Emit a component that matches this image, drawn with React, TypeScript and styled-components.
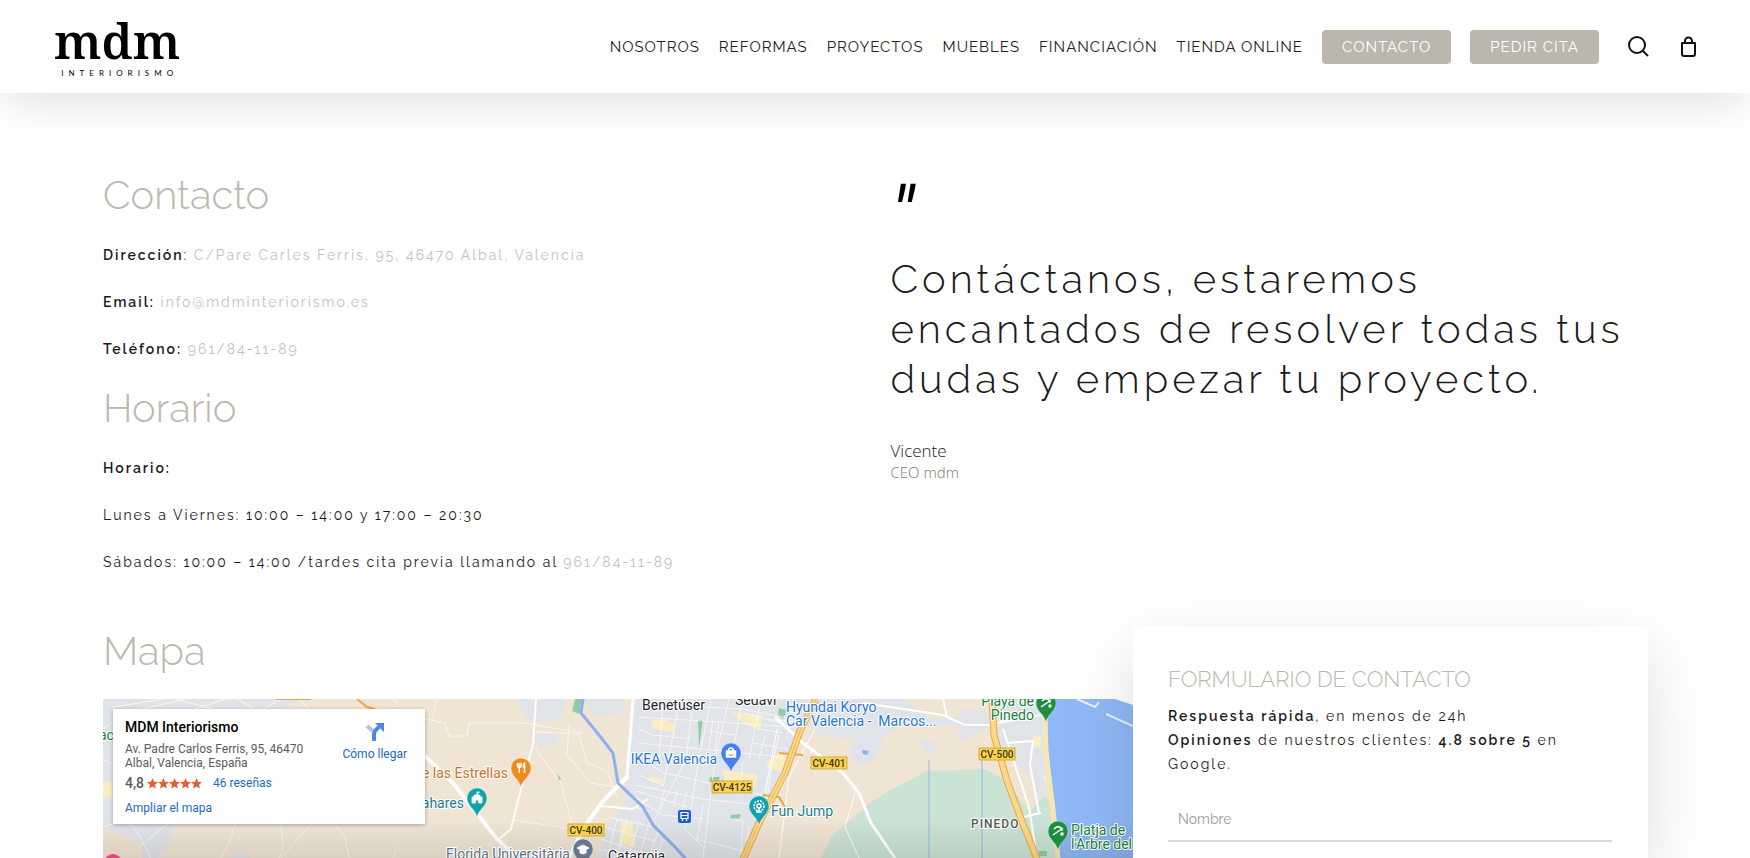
import React from "react";
import styled, { createGlobalStyle } from "styled-components";

const sans = `Raleway, Lato, "Open Sans", sans-serif`;
const mapFont = `Roboto, "Liberation Sans", sans-serif`;
const sand = "#bbb8ae";
const ink = "#1a1a1a";

const GlobalStyle = createGlobalStyle`
  *, *::before, *::after { box-sizing: border-box; }
  body {
    margin: 0;
    background: #fff;
    color: ${ink};
    font-family: ${sans};
    font-weight: 300;
    font-variant-numeric: oldstyle-nums;
  }
  a { color: inherit; text-decoration: none; }
  h1, h2, h3, p, blockquote, figure { margin: 0; }
`;

const Page = styled.div`
  min-height: 100vh;
  display: flex;
  flex-direction: column;
`;

/* Header */
const Header = styled.header`
  display: flex;
  align-items: center;
  justify-content: space-between;
  height: 93px;
  padding: 0 54px;
  background: #fff;
  box-shadow: 0 14px 44px -4px rgba(0, 0, 0, 0.12);
`;

const Logo = styled.a`
  display: flex;
  flex-direction: column;
  align-items: center;
  gap: 4px;
  color: #000;
`;

const LogoName = styled.span`
  font: 600 49px/48px "Noto Serif", "DejaVu Serif", serif;
`;

const LogoTag = styled.span`
  font: 400 8px/10px Lato, sans-serif;
  letter-spacing: 5px;
  padding-left: 5px;
`;

const Nav = styled.nav`
  display: flex;
  align-items: center;
  gap: 19px;
`;

const NavLink = styled.a`
  font-size: 15px;
  line-height: 34px;
  font-weight: 400;
  letter-spacing: 1px;
  color: #222;
`;

const NavButton = styled(NavLink)`
  padding: 0 20px;
  border-radius: 4px;
  background: #bcb7ac;
  color: #fff;
`;

const Tools = styled.div`
  display: flex;
  align-items: center;
  gap: 32px;
  margin-left: 10px;
`;

const IconButton = styled.button`
  display: flex;
  padding: 0;
  border: 0;
  background: none;
  color: #111;
  cursor: pointer;
`;

/* Content */
const Main = styled.main`
  flex: 1;
  display: flex;
  flex-direction: column;
  gap: 52px;
  padding: 77px 102px 0 103px;
`;

const Intro = styled.section`
  display: grid;
  grid-template-columns: 1fr 1fr;
  gap: 30px;
`;

const InfoColumn = styled.div`
  display: flex;
  flex-direction: column;
  gap: 22px;
`;

const Heading = styled.h2`
  margin-bottom: 23px;
  font-size: 40px;
  line-height: 50px;
  font-weight: 300;
  color: ${sand};
`;

const Lines = styled.div`
  display: flex;
  flex-direction: column;
  gap: 23px;
`;

const Text = styled.p`
  font-size: 14px;
  line-height: 24px;
  font-weight: 400;
  letter-spacing: 2px;

  strong { font-weight: 600; }
  a { color: #c3c1bb; }
`;

const Quote = styled.figure`
  display: flex;
  flex-direction: column;
`;

const QuoteMark = styled.span`
  height: 84px;
  font: italic 400 76px/90px Roboto, sans-serif;
  color: #000;
`;

const QuoteText = styled.blockquote`
  margin-bottom: 36px;
  font-size: 40px;
  line-height: 50px;
  letter-spacing: 4px;
`;

const Author = styled.figcaption`
  display: flex;
  flex-direction: column;
  font: 300 17px/22px "Open Sans", sans-serif;
`;

const Role = styled.span`
  font-size: 15px;
  line-height: 20px;
  color: #777;
`;

const Lower = styled.section`
  flex: 1;
  display: grid;
  grid-template-columns: 2fr 1fr;
`;

const MapColumn = styled.div`
  display: flex;
  flex-direction: column;
`;

const MapFrame = styled.div`
  position: relative;
  flex: 1;
  min-height: 150px;
  padding: 10px;
  overflow: hidden;
  background: #f0e4d4;
  font-family: ${mapFont};
  font-weight: 400;
  font-variant-numeric: normal;
`;

const MapDrawing = styled.svg`
  position: absolute;
  inset: 0;
  width: 100%;
  height: 100%;
`;

const PlaceCard = styled.div`
  position: relative;
  display: flex;
  justify-content: space-between;
  width: 312px;
  height: 115px;
  padding: 10px 18px 0 12px;
  background: #fff;
  box-shadow: 0 1px 4px rgba(0, 0, 0, 0.3);
  font-size: 12px;
  line-height: 14px;
  color: #5b5b5b;

  a { color: #1a6ac0; }
`;

const PlaceInfo = styled.div`
  display: flex;
  flex-direction: column;
`;

const PlaceName = styled.h3`
  margin-bottom: 7px;
  font-size: 14px;
  line-height: 16px;
  font-weight: 500;
  color: #000;
`;

const Rating = styled.div`
  display: flex;
  align-items: center;
  gap: 3px;
  margin: 6px 0 11px;

  a { margin-left: 8px; }
`;

const Score = styled.span`
  font-size: 14px;
  font-weight: 500;
`;

const Directions = styled.a`
  display: flex;
  flex-direction: column;
  align-items: center;
  gap: 5px;
  align-self: flex-start;
  padding-top: 3px;
`;

const FormCard = styled.form`
  position: relative;
  padding: 36px 36px 16px 35px;
  background: #fff;
  box-shadow: 0 24px 64px rgba(0, 0, 0, 0.13);
`;

const FormTitle = styled.h3`
  margin-bottom: 8px;
  font-size: 22px;
  line-height: 34px;
  font-weight: 300;
  color: ${sand};
`;

const Field = styled.input`
  display: block;
  width: 100%;
  height: 44px;
  margin-top: 22px;
  padding: 0 10px;
  border: 0;
  border-bottom: 2px solid #d8d8d8;
  border-radius: 0;
  background: none;
  font: 400 14px ${sans};
  outline: none;

  &::placeholder { color: #999; opacity: 1; }
`;

const halo = { stroke: "#fff", strokeWidth: 2, paintOrder: "stroke" as const, strokeLinejoin: "round" as const };

function Pin({ x, y, color, children }: { x: number; y: number; color: string; children?: React.ReactNode }) {
  return (
    <g transform={`translate(${x} ${y})`}>
      <path d="M0 0C-2-8-10-11-10-19a10 10 0 0 1 20 0C10-11 2-8 0 0Z" fill={color} stroke="#fff" strokeOpacity=".6" strokeWidth=".6" />
      <g transform="translate(0 -19)" fill="none" stroke="#fff" strokeWidth="1.5">{children}</g>
    </g>
  );
}

function Badge({ x, y, w, children }: { x: number; y: number; w: number; children: string }) {
  return (
    <g>
      <rect x={x} y={y} width={w} height="12" fill="#fbd34c" stroke="#c9a227" strokeWidth=".8" />
      <text x={x + w / 2} y={y + 10} fontSize="10" fontWeight="500" textAnchor="middle" fill="#3d3520">{children}</text>
    </g>
  );
}

function CityMap() {
  const beach = <><path d="M-5 4 5-3M-4-2C0-6 4-4 4 0" /><circle cx="4" cy="3" r="1" fill="#fff" /></>;
  return (
    <MapDrawing viewBox="0 0 1030 300" preserveAspectRatio="xMinYMin slice" aria-hidden="true">
      <defs>
        <linearGradient id="shade" x1="0" x2="0" y1="0" y2="1">
          <stop offset="0" stopOpacity="0" />
          <stop offset="1" stopOpacity=".09" />
        </linearGradient>
      </defs>
      <rect width="1030" height="300" fill="#f0e4d4" />

      {/* built-up areas */}
      <g fill="#e0e4e9">
        <path d="M0 0H196L176 14H0ZM0 0H12V82L0 88ZM0 98 12 102V125H72L66 145 54 159H40L36 140 20 136 0 128ZM128 159 134 152 142 153 147 159Z" />
        <path d="M413 0H462L458 18 440 24 424 20ZM478 0H520V14L492 17ZM432 36 452 34 456 45 436 47Z" />
        <path d="M533 0H712L700 30 684 70 660 115 640 159V300H480L500 135 520 108 524 78Z" />
        <path d="M715 0H800L815 12 845 6 888 14 885 28 860 42 852 36 862 26 800 26 780 38 772 62 756 68 745 52 752 40 715 36 706 26ZM816 40 832 44 834 54 820 52ZM894 0H944L947 82 936 104 928 74 906 62 895 36Z" />
      </g>
      <path d="M805 0H864L858 18 826 20Z" fill="#f0e4d4" />

      {/* parks, marsh and commercial patches */}
      <path d="M714 300 718 159 728 138 765 105 786 92 824 72 882 70 900 80 926 112 943 96 952 116 958 159V300Z" fill="#cbe3d4" />
      <g fill="#8fcdaa">
        <path d="M472 0H481L476 15 469 12ZM595 21H600L596 49ZM607 78H617L615 84 606 83ZM628 116 638 115 636 120 627 119ZM676 9 684 11 680 20 675 16ZM454 74 458 80 456 82Z" />
        <path d="M936 152H944V157H936Z" />
      </g>
      <g fill="#fbedc3">
        <path d="M548 22 562 20 574 26 568 33 551 30ZM628 13 660 16 657 31 640 24ZM620 70 655 76 650 92 622 86ZM665 62 678 52 684 60 678 72 664 69ZM518 122 530 124 532 148 516 145ZM546 76 560 80 558 85 546 82Z" />
        <path d="M930 36 938 38 937 50 930 47ZM940 75 944 78 941 84ZM0 82 9 83V97L0 98Z" />
      </g>

      {/* sea and piers */}
      <path d="M943 0 943 30 947 70 952 105 957 159 960 300H1030V0Z" fill="#8fb8f6" />
      <path d="M942 14 943 52 947 88 951 124 955 159" fill="none" stroke="#f7e6b4" strokeWidth="5" />
      <path d="M974 0 992 8 996 3M1003 15 1030 27" fill="none" stroke="#e8f0fb" strokeWidth="2" />
      <path d="M1012 0H1030V6Z" fill="#fff" />

      {/* minor streets */}
      <g fill="none" stroke="#fff" strokeWidth="1" opacity=".7">
        <path d="M10 8 60 0M40 10 82 0M72 0 110 10M92 10 122 0M135 0 150 10M160 10 180 0M196 0 206 10M0 30 12 22M0 60 10 66M0 128 24 120 36 136 48 160M64 125 36 148M132 125 126 145 118 159M178 125 180 150 176 159M208 125 178 159M232 125 242 138 246 159M296 8 290 0M322 20 342 24 346 37 364 37 366 24 420 24 480 34M333 0 330 20" />
        <path d="M434 33 476 35 484 64 504 72 514 98M466 26 464 56 488 84 512 88M411 121 470 130M431 48 458 84 470 130M290 159 294 148" />
        <path d="M536 18 600 22 690 28M535 44 620 52 680 58M540 62 562 74 670 98M533 86 600 100 656 106M532 98 560 116 600 120M560 0 556 60M577 0 560 88M590 0 583 60 552 120M608 0 596 60 588 110 582 130M626 0 612 60 600 159M640 0 630 50M658 0 646 60M690 0 684 40M664 20 700 24M640 14 700 30M598 8 640 10 690 20" />
        <path d="M536 76 560 86M534 92 584 108M530 108 546 112M574 92 570 108M562 90 556 110M584 92 577 120M600 106 594 140M592 140 640 152M640 62 636 96M668 70 664 100M632 120 640 122 638 159M646 128 644 142" />
        <path d="M505 118 560 130M500 128 552 142M498 140 544 156M496 150 530 159M514 120 504 159M524 120 514 159M536 122 526 159M546 124 536 159M556 130 546 159M560 140 554 159M582 130 600 148" />
        <path d="M536 30 550 36 588 40M610 20 606 50M616 22 612 52M606 32 632 36M655 30 680 34M650 44 684 50M662 36 656 60M676 36 668 70" />
      </g>

      {/* secondary roads */}
      <g fill="none" stroke="#fff" strokeWidth="2">
        <path d="M433 0 430 45 421 78 408 130 396 140" />
        <path d="M530 0 524 78" strokeWidth="3" />
        <path d="M524 78 500 102 480 130 466 159" strokeWidth="4" />
        <path d="M322 57 350 84 394 140 414 159" strokeWidth="4" />
        <path d="M526 78 514 90M498 107 530 110 545 100" />
        <path d="M672 18 700 44 740 74 756 94 768 124 792 159" strokeWidth="3" />
        <path d="M712 30 686 78 676 159M752 94 742 128 756 159M674 30 662 94" strokeWidth="1" />
        <path d="M760 4 840 16 862 26 888 26M840 0 844 18M900 30 912 66 926 108 934 159M904 44 930 42 927 66 936 114M920 118 938 114M895 24 938 16" />
      </g>

      {/* river and canals */}
      <path d="M480 0 478 14 496 36 510 54 515 84 540 108 550 126 572 148 582 159 600 190" fill="none" stroke="#8fb0ee" strokeWidth="3" />
      <path d="M826 61V300M879 58V300" stroke="#91b9e2" strokeWidth="1" />
      <path d="M759 51 766 52 764 56 760 55Z" fill="#8fb0ee" />

      {/* main roads */}
      <g fill="none" strokeLinejoin="round">
        <g stroke="#e9a93f">
          <path d="M713 0 697 32 682 74 656 124 638 165 620 200M889 0 891 36 904 82 920 125 936 165 950 200" strokeWidth="7" />
          <path d="M676 54 700 56M660 96 676 98 682 108M254 0 264 8 272 10" strokeWidth="2" />
        </g>
        <path d="M713 0 697 32 682 74 656 124 638 165 620 200M889 0 891 36 904 82 920 125 936 165 950 200" stroke="#fcd98a" strokeWidth="5" />
        <path d="M713 0 697 32 682 74 656 124 638 165" stroke="#efb457" strokeWidth="1" />
        <path d="M173 0H208" stroke="#d9a45e" strokeWidth="2" />
      </g>
      <path d="M0 120H1030V159H0Z" fill="url(#shade)" />
      <path d="M0 159H1030V300H0Z" opacity=".09" />

      <Badge x={609} y={82} w={40}>CV-4125</Badge>
      <Badge x={708} y={58} w={36}>CV-401</Badge>
      <Badge x={876} y={49} w={36}>CV-500</Badge>
      <Badge x={465} y={125} w={36}>CV-400</Badge>

      <rect x="575" y="111" width="13" height="13" rx="2" fill="#1b5fce" />
      <path d="M578 113.500h7v6h-7zM578 116.500h7M579 122l1-2M584 122l-1-2" fill="none" stroke="#fff" strokeWidth="1.200" />

      <g fontSize="14" {...halo}>
        <g fill="#1f2328">
          <text x="539" y="11">Benetúser</text>
          <text x="632" y="6">Sedaví</text>
          <text x="505" y="162">Catarroja</text>
        </g>
        <g fill="#2a75d3">
          <text x="683" y="13">Hyundai Koryo</text>
          <text x="683" y="27">Car Valencia -&nbsp; Marcos...</text>
          <text x="614" y="65" textAnchor="end">IKEA Valencia</text>
        </g>
        <text x="405" y="79" textAnchor="end" fill="#cf6f24">e las Estrellas</text>
        <text x="361" y="109" textAnchor="end" fill="#16808a">ahares</text>
        <text x="668" y="117" fill="#16808a">Fun Jump</text>
        <text x="343" y="160" fill="#5f6f7e">Florida Universitària</text>
        <g fill="#178040">
          <text x="-4" y="41">ac</text>
          <text x="931" y="7" textAnchor="end">Playa de</text>
          <text x="931" y="21" textAnchor="end">Pinedo</text>
          <text x="968" y="136">Platja de</text>
          <text x="968" y="150">l'Arbre del</text>
        </g>
        <text x="868" y="129" fontSize="12" fontWeight="500" letterSpacing="1" fill="#555">PINEDO</text>
      </g>

      <Pin x={418} y={88} color="#f08a1c"><path d="M-3.500-5V-2.500C-3.500 0 0 0 0-2.500V-5M-1.750-5V5M3.500 5V-5C2-4 2-1 3.500 0" /></Pin>
      <Pin x={374} y={118} color="#12a2ae"><path d="M-5 5V-1H-3V-3H3V-1H5V5H1.500V2H-1.500V5ZM0-3V-6H2.500" fill="#fff" strokeWidth=".8" /></Pin>
      <Pin x={628} y={73} color="#4481ee"><path d="M-4.500-2H4.500V4H-4.500Z" fill="#fff" /><path d="M-2.500-2C-2.500-6 2.500-6 2.500-2" /><path d="M-2 1C-1 3 1 3 2 1" stroke="#4481ee" strokeWidth="1" /></Pin>
      <Pin x={656} y={126} color="#12a2ae"><circle r="5" strokeDasharray="2 1" /><circle r="2" /><path d="M0 1V6M-3 6H3" /></Pin>
      <Pin x={480} y={169} color="#66788a"><path d="M-6-1 0-4 6-1 0 2ZM-3 1V4C-1 5 1 5 3 4V1" fill="#fff" strokeWidth="1" /></Pin>
      <Pin x={943} y={23} color="#1c8f3f">{beach}</Pin>
      <Pin x={955} y={151} color="#1c8f3f">{beach}</Pin>
      <circle cx="10" cy="164" r="9" fill="#e0457b" />
    </MapDrawing>
  );
}

function Stars() {
  const star = "M5.500 0 7 3.800 11 4.100 8 6.700 9 10.600 5.500 8.500 2 10.600 3 6.700 0 4.100 4 3.800Z";
  return (
    <svg width="55" height="11" role="img" aria-label="4,8 de 5 estrellas" fill="#e06030">
      {[0, 11, 22, 33, 44].map((x) => <path key={x} d={star} transform={`translate(${x})`} />)}
    </svg>
  );
}

const links = ["NOSOTROS", "REFORMAS", "PROYECTOS", "MUEBLES", "FINANCIACIÓN", "TIENDA ONLINE"];

export default function App() {
  return (
    <Page>
      <GlobalStyle />
      <Header>
        <Logo href="#">
          <LogoName>mdm</LogoName>
          <LogoTag>INTERIORISMO</LogoTag>
        </Logo>
        <Nav>
          {links.map((l) => <NavLink key={l} href="#">{l}</NavLink>)}
          <NavButton href="#">CONTACTO</NavButton>
          <NavButton href="#">PEDIR CITA</NavButton>
          <Tools>
            <IconButton aria-label="Buscar">
              <svg width="21" height="21" fill="none" stroke="currentColor" strokeWidth="2">
                <circle cx="9" cy="9" r="8" />
                <path d="M14.500 14.500 20 20" />
              </svg>
            </IconButton>
            <IconButton aria-label="Carrito">
              <svg width="15" height="21" fill="none" stroke="currentColor" strokeWidth="2" strokeLinejoin="round">
                <path d="M1 7H14V18Q14 20 12 20H3Q1 20 1 18ZM4 7V5A3.500 3.500 0 0 1 11 5V7" />
              </svg>
            </IconButton>
          </Tools>
        </Nav>
      </Header>

      <Main>
        <Intro>
          <InfoColumn>
            <div>
              <Heading>Contacto</Heading>
              <Lines>
                <Text><strong>Dirección</strong>: <a href="#">C/Pare Carles Ferris, 95, 46470 Albal, Valencia</a></Text>
                <Text><strong>Email:</strong> <a href="#">info@mdminteriorismo.es</a></Text>
                <Text><strong>Teléfono:</strong> <a href="#">961/84-11-89</a></Text>
              </Lines>
            </div>
            <div>
              <Heading>Horario</Heading>
              <Lines>
                <Text><strong>Horario:</strong></Text>
                <Text>Lunes a Viernes: 10:00 – 14:00 y 17:00 – 20:30</Text>
                <Text>Sábados: 10:00 – 14:00 /tardes cita previa llamando al <a href="#">961/84-11-89</a></Text>
              </Lines>
            </div>
          </InfoColumn>
          <Quote>
            <QuoteMark>"</QuoteMark>
            <QuoteText>Contáctanos, estaremos encantados de resolver todas tus dudas y empezar tu proyecto.</QuoteText>
            <Author>Vicente<Role>CEO mdm</Role></Author>
          </Quote>
        </Intro>

        <Lower>
          <MapColumn>
            <Heading>Mapa</Heading>
            <MapFrame>
              <CityMap />
              <PlaceCard>
                <PlaceInfo>
                  <PlaceName>MDM Interiorismo</PlaceName>
                  <span>Av. Padre Carlos Ferris, 95, 46470</span>
                  <span>Albal, Valencia, España</span>
                  <Rating>
                    <Score>4,8</Score>
                    <Stars />
                    <a href="#">46 reseñas</a>
                  </Rating>
                  <a href="#">Ampliar el mapa</a>
                </PlaceInfo>
                <Directions href="#">
                  <svg width="20" height="20" fill="none">
                    <path d="M2 4 8 9" stroke="#a9c7ee" strokeWidth="4" />
                    <path d="M9 19V12Q9 9 15 4" stroke="#4a8ad8" strokeWidth="4" />
                    <path d="M10 1H19V10Z" fill="#4a8ad8" />
                  </svg>
                  Cómo llegar
                </Directions>
              </PlaceCard>
            </MapFrame>
          </MapColumn>
          <FormCard>
            <FormTitle>FORMULARIO DE CONTACTO</FormTitle>
            <Text><strong>Respuesta rápida</strong>, en menos de 24h</Text>
            <Text><strong>Opiniones</strong> de nuestros clientes: <strong>4.8 sobre 5</strong> en Google.</Text>
            <Field type="text" placeholder="Nombre" aria-label="Nombre" />
          </FormCard>
        </Lower>
      </Main>
    </Page>
  );
}
